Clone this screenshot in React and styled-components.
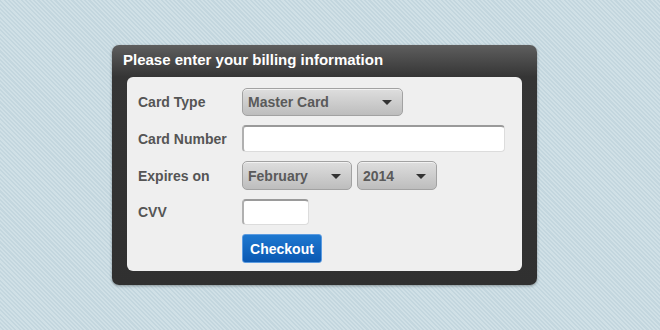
import React from 'react'
import styled, { createGlobalStyle } from 'styled-components'

const GlobalStyle = createGlobalStyle`
  html, body {
    margin: 0;
    padding: 0;
  }
  body {
    width: 660px;
    height: 330px;
    overflow: hidden;
    font-family: Arial, 'Liberation Sans', sans-serif;
    background-color: #cadce3;
    background-image: repeating-linear-gradient(
      45deg,
      #d0e0e6 0px,
      #d0e0e6 1.5px,
      #c3d6de 1.5px,
      #c3d6de 3px
    );
  }
`

const Page = styled.div`
  padding: 45px 0 0 112px;
`

const Panel = styled.div`
  width: 425px;
  box-sizing: border-box;
  border-radius: 7px;
  background: linear-gradient(to bottom, #5e5e5e 0px, #353535 32px, #303030 100%);
  box-shadow: 0 1px 3px rgba(0, 0, 0, 0.35);
  padding: 0 15px 14px 15px;
`

const Title = styled.h2`
  margin: 0 0 0 -4px;
  height: 32px;
  line-height: 29px;
  font-size: 15px;
  font-weight: bold;
  color: #fff;
`

const Body = styled.div`
  background: #efefef;
  border-radius: 6px;
  padding: 11px 0 8px 11px;
  display: grid;
  grid-template-columns: 104px auto;
  row-gap: 9px;
  align-items: center;
`

const Label = styled.label`
  font-size: 14px;
  font-weight: bold;
  color: #555;
`

const Controls = styled.div`
  display: flex;
  gap: 5px;
`

const Select = styled.div`
  width: ${p => p.$w}px;
  height: ${p => p.$h}px;
  box-sizing: border-box;
  border: 1px solid #a2a2a2;
  border-radius: 5px;
  background: linear-gradient(to bottom, #dedede, #bdbdbd);
  box-shadow: inset 0 1px 0 rgba(255, 255, 255, 0.6);
  display: flex;
  align-items: center;
  justify-content: space-between;
  padding: 0 10px 0 5px;
  font-size: 14px;
  font-weight: bold;
  color: #5a5a5a;
`

const Arrow = styled.span`
  width: 0;
  height: 0;
  border-left: 5px solid transparent;
  border-right: 5px solid transparent;
  border-top: 5px solid #333;
  margin-top: 1px;
`

const Input = styled.div`
  width: ${p => p.$w}px;
  height: ${p => p.$h}px;
  box-sizing: border-box;
  background: #fff;
  border: 1px solid #dcdcdc;
  border-top: 2px solid #9a9a9a;
  border-left: 2px solid #b0b0b0;
  border-radius: 4px;
`

const Button = styled.button`
  width: 80px;
  height: 29px;
  box-sizing: border-box;
  border: 1px solid #5b9be0;
  border-radius: 3px;
  background: linear-gradient(to bottom, #1e78d0, #0a58b2);
  color: #fff;
  font-family: Arial, 'Liberation Sans', sans-serif;
  font-size: 14px;
  font-weight: bold;
  padding: 0;
  cursor: pointer;
`

const Spacer = styled.div``

const App = () => (
  <>
    <GlobalStyle />
    <Page>
      <Panel>
        <Title>Please enter your billing information</Title>
        <Body>
          <Label>Card Type</Label>
          <Controls>
            <Select $w={161} $h={28}>
              Master Card
              <Arrow />
            </Select>
          </Controls>

          <Label>Card Number</Label>
          <Controls>
            <Input $w={263} $h={27} />
          </Controls>

          <Label>Expires on</Label>
          <Controls>
            <Select $w={110} $h={29}>
              February
              <Arrow />
            </Select>
            <Select $w={80} $h={29}>
              2014
              <Arrow />
            </Select>
          </Controls>

          <Label>CVV</Label>
          <Controls>
            <Input $w={67} $h={26} />
          </Controls>

          <Spacer />
          <Controls>
            <Button>Checkout</Button>
          </Controls>
        </Body>
      </Panel>
    </Page>
  </>
)

export default App
